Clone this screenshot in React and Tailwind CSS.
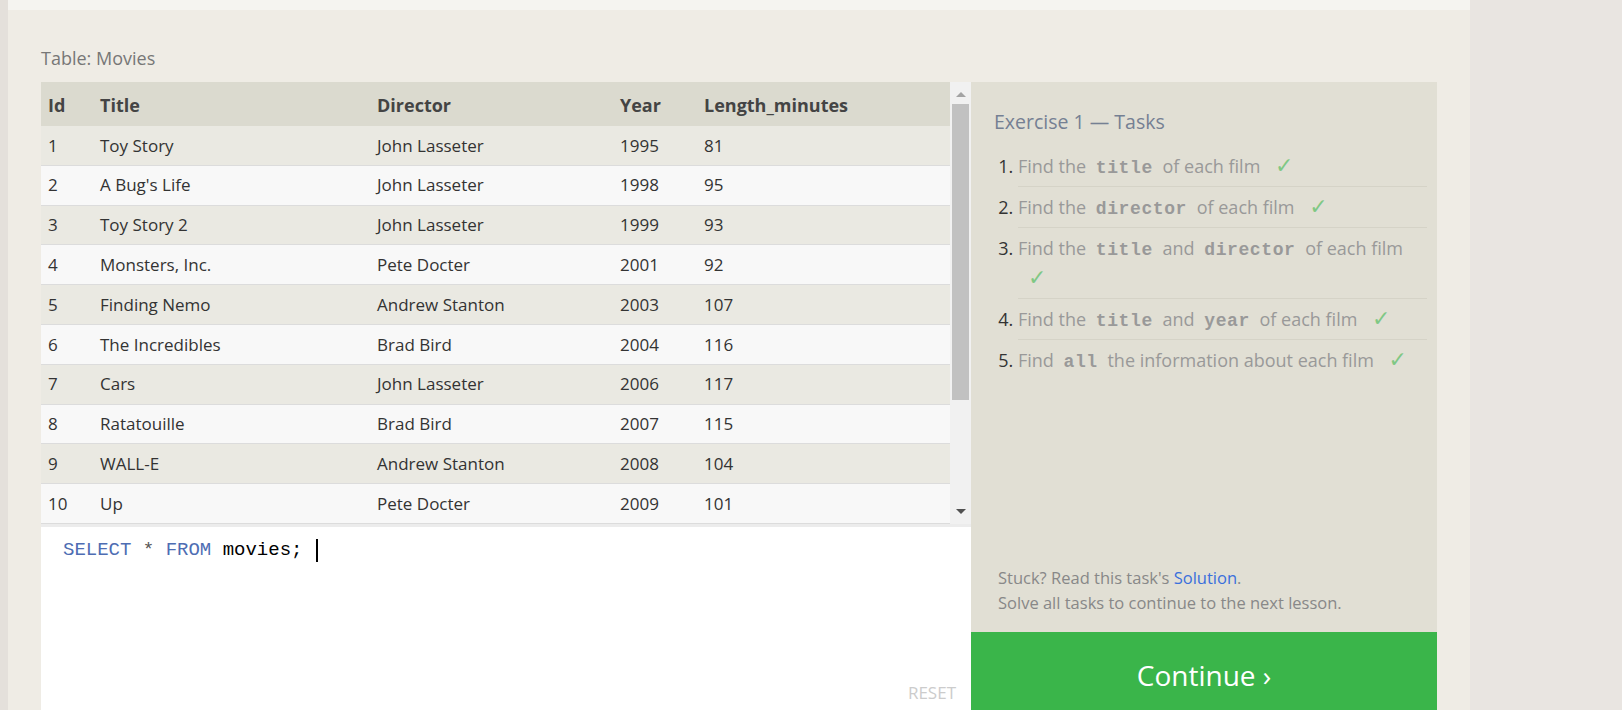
const movies = [
  [1, "Toy Story", "John Lasseter", 1995, 81],
  [2, "A Bug's Life", "John Lasseter", 1998, 95],
  [3, "Toy Story 2", "John Lasseter", 1999, 93],
  [4, "Monsters, Inc.", "Pete Docter", 2001, 92],
  [5, "Finding Nemo", "Andrew Stanton", 2003, 107],
  [6, "The Incredibles", "Brad Bird", 2004, 116],
  [7, "Cars", "John Lasseter", 2006, 117],
  [8, "Ratatouille", "Brad Bird", 2007, 115],
  [9, "WALL-E", "Andrew Stanton", 2008, 104],
  [10, "Up", "Pete Docter", 2009, 101],
];

const cols = "grid grid-cols-[52px_277px_243px_84px_1fr]";

function Code({ children }) {
  return (
    <code className="px-[5px] font-['Liberation_Mono',monospace] text-[18px] leading-none font-bold tracking-[0.6px] text-[#999]">
      {children}
    </code>
  );
}

function Check() {
  return (
    <span className="ml-[10px] font-['DejaVu_Sans',sans-serif] text-[22px] leading-none text-[#7fc884]">✓</span>
  );
}

function Task({ children, last }) {
  return (
    <li
      className={
        "py-[5px] leading-[30px] marker:text-[#333] " +
        (last ? "" : "border-b border-[#d5d3c7]")
      }
    >
      {children}
    </li>
  );
}

function MoviesTable() {
  return (
    <div className="flex h-[445px] shrink-0 border-b-[3px] border-[#ececec]">
      <div className="w-[909px] overflow-hidden">
        <div className={cols + " h-[44px] items-center bg-[#dbdacf] pt-[2px] text-[18px] font-bold text-[#444]"}>
          <div className="px-[7px]">Id</div>
          <div className="px-[7px]">Title</div>
          <div className="px-[7px]">Director</div>
          <div className="px-[7px]">Year</div>
          <div className="px-[7px]">Length_minutes</div>
        </div>
        {movies.map((m, i) => (
          <div
            key={m[0]}
            className={
              cols +
              " h-[39.8px] items-center border-b border-[#dcdcdc] text-[17px] text-[#333] " +
              (i % 2 === 0 ? "bg-[#eae9e2]" : "bg-[#f8f8f8]")
            }
          >
            {m.map((v, j) => (
              <div key={j} className="px-[7px]">
                {v}
              </div>
            ))}
          </div>
        ))}
      </div>
      <div className="relative w-[21px] bg-[#f1f1f1]">
        <div className="mx-auto mt-[10px] h-0 w-0 border-x-[5px] border-b-[5px] border-x-transparent border-b-[#a3a3a3]" />
        <div className="mx-[2px] mt-[7px] h-[296px] bg-[#c1c1c1]" />
        <div className="absolute bottom-[10px] left-1/2 h-0 w-0 -translate-x-1/2 border-x-[5px] border-t-[5px] border-x-transparent border-t-[#505050]" />
      </div>
    </div>
  );
}

function Editor() {
  return (
    <div className="relative h-[191px] shrink-0 bg-white px-[22px] pt-[11px]">
      <div className="flex items-center font-['Liberation_Mono',monospace] text-[19px] leading-[24px]">
        <span className="text-[#4e6db3]">SELECT</span>
        <span className="whitespace-pre text-[#555]"> * </span>
        <span className="text-[#4e6db3]">FROM</span>
        <span className="whitespace-pre text-black"> movies; </span>
        <span className="ml-[2px] h-[23px] w-[2px] bg-black" />
      </div>
      <div className="absolute bottom-[13px] right-[15px] text-[17px] text-[#cccccc]">RESET</div>
    </div>
  );
}

function TasksPanel() {
  return (
    <div className="flex w-[466px] shrink-0 flex-col bg-[#e1dfd4]">
      <div className="pl-[23px] pr-[10px] pt-[28px]">
        <h2 className="text-[19.5px] leading-[24px] text-[#758093]">Exercise 1 — Tasks</h2>
        <ol className="mt-[12px] list-decimal pl-[24px] text-[18px] text-[#999]">
          <Task>
            Find the <Code>title</Code> of each film <Check />
          </Task>
          <Task>
            Find the <Code>director</Code> of each film <Check />
          </Task>
          <Task>
            Find the <Code>title</Code> and <Code>director</Code> of each film <Check />
          </Task>
          <Task>
            Find the <Code>title</Code> and <Code>year</Code> of each film <Check />
          </Task>
          <Task last>
            Find <Code>all</Code> the information about each film <Check />
          </Task>
        </ol>
      </div>
      <div className="mt-auto pb-[17px] pl-[27px] text-[16.5px] leading-[25px] text-[#888]">
        <p>
          Stuck? Read this task's <a className="text-[#3a6fdc]">Solution</a>.
        </p>
        <p>Solve all tasks to continue to the next lesson.</p>
      </div>
      <button className="flex h-[86px] shrink-0 items-center justify-center bg-[#3ab54a] text-[28px] text-white">
        Continue ›
      </button>
    </div>
  );
}

export default function App() {
  return (
    <div className="flex h-[710px] overflow-hidden bg-[#e9e5e1] font-['Open_Sans',sans-serif]">
      <div className="w-[8px] shrink-0 bg-[#e4e0db]" />
      <div className="flex w-[1462px] shrink-0 flex-col bg-[#efece5]">
        <div className="h-[10px] shrink-0 bg-[#f5f4f0]" />
        <div className="shrink-0 px-[33px] pt-[38px]">
          <div className="mb-[14px] text-[18px] leading-[20px] text-[#777]">Table: Movies</div>
          <div className="flex">
            <div className="flex w-[930px] shrink-0 flex-col">
              <MoviesTable />
              <Editor />
            </div>
            <TasksPanel />
          </div>
        </div>
      </div>
    </div>
  );
}
